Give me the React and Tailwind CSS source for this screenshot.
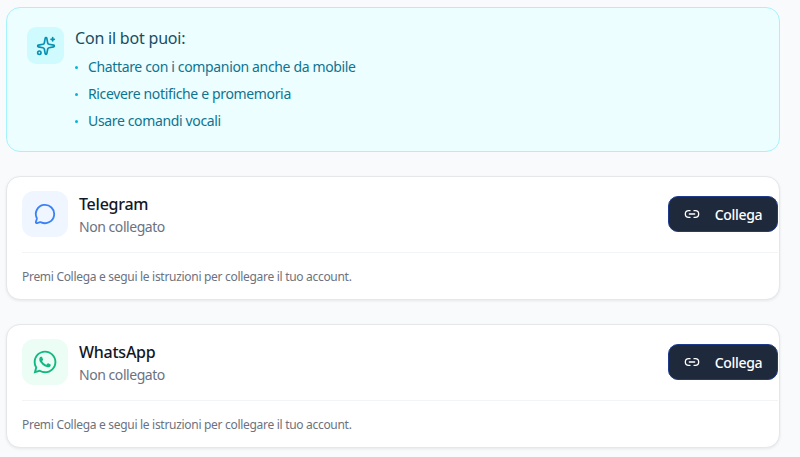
import React from 'react';
import { Sparkles, MessageCircle, Link2 } from 'lucide-react';
import { FaWhatsapp } from 'react-icons/fa';

const features = [
    'Chattare con i companion anche da mobile',
    'Ricevere notifiche e promemoria',
    'Usare comandi vocali',
];

const ChannelCard = ({ name, icon, iconBg }) => (
    <div className="h-[124px] shrink-0 rounded-[14px] border border-[#e5e7eb] bg-white pl-[15px] pr-[1px] pt-[14px] shadow-[0_1px_3px_rgba(0,0,0,0.08)]">
        <div className="flex items-start justify-between">
            <div className="flex items-center gap-[11px]">
                <div className={`flex h-[46px] w-[46px] items-center justify-center rounded-[12px] ${iconBg}`}>
                    {icon}
                </div>
                <div className="h-[46px] pt-[2px]">
                    <p className="text-[16px] leading-[23px] font-medium tracking-[-0.25px] text-[#111827]">{name}</p>
                    <p className="text-[14px] leading-[22px] tracking-[-0.45px] text-[#6b7280]">Non collegato</p>
                </div>
            </div>
            <button className="mt-[5px] flex h-[36px] w-[110px] items-center justify-center gap-[15px] rounded-[10px] border border-[#1e3a8a] bg-[#1e293b] text-[14px] font-medium tracking-[-0.3px] text-white">
                <Link2 size={16} strokeWidth={2} />
                <span>Collega</span>
            </button>
        </div>
        <div className="mt-[15px] border-t border-[#f3f4f6] pt-[16px]">
            <p className="text-[12px] leading-[16px] tracking-[-0.3px] text-[#6b7280]">
                Premi Collega e segui le istruzioni per collegare il tuo account.
            </p>
        </div>
    </div>
);

export default function App() {
    return (
        <div
            className="flex h-[457px] w-[800px] flex-col gap-[24px] overflow-hidden bg-[#f9fafb] pl-[6px] pr-[20px] pt-[7px]"
            style={{ fontFamily: '"Noto Sans", sans-serif' }}
        >
            {/* Info box */}
            <div className="flex h-[145px] shrink-0 gap-[11px] rounded-[14px] border border-[#a5f3fc] bg-[#ecfeff] pl-[20px] pt-[19px]">
                <div className="flex h-[37px] w-[37px] items-center justify-center rounded-[9px] bg-[#cffafe]">
                    <Sparkles size={20} strokeWidth={2} className="text-[#0891b2]" />
                </div>
                <div>
                    <h3 className="text-[16px] leading-[22px] font-normal tracking-[-0.2px] text-[#164e63]">Con il bot puoi:</h3>
                    <ul className="mt-[7px] flex flex-col gap-[5px]">
                        {features.map(item => (
                            <li key={item} className="flex items-center gap-[10px] text-[14px] leading-[22px] tracking-[-0.35px] text-[#0e7490]">
                                <span className="h-[3px] w-[3px] rounded-full bg-[#06b6d4]" />
                                {item}
                            </li>
                        ))}
                    </ul>
                </div>
            </div>

            <ChannelCard
                name="Telegram"
                iconBg="bg-[#eff6ff]"
                icon={<MessageCircle size={22} strokeWidth={2} className="text-[#3b82f6]" />}
            />
            <ChannelCard
                name="WhatsApp"
                iconBg="bg-[#ecfdf5]"
                icon={<FaWhatsapp size={26} className="text-[#10b981]" />}
            />
        </div>
    );
}
